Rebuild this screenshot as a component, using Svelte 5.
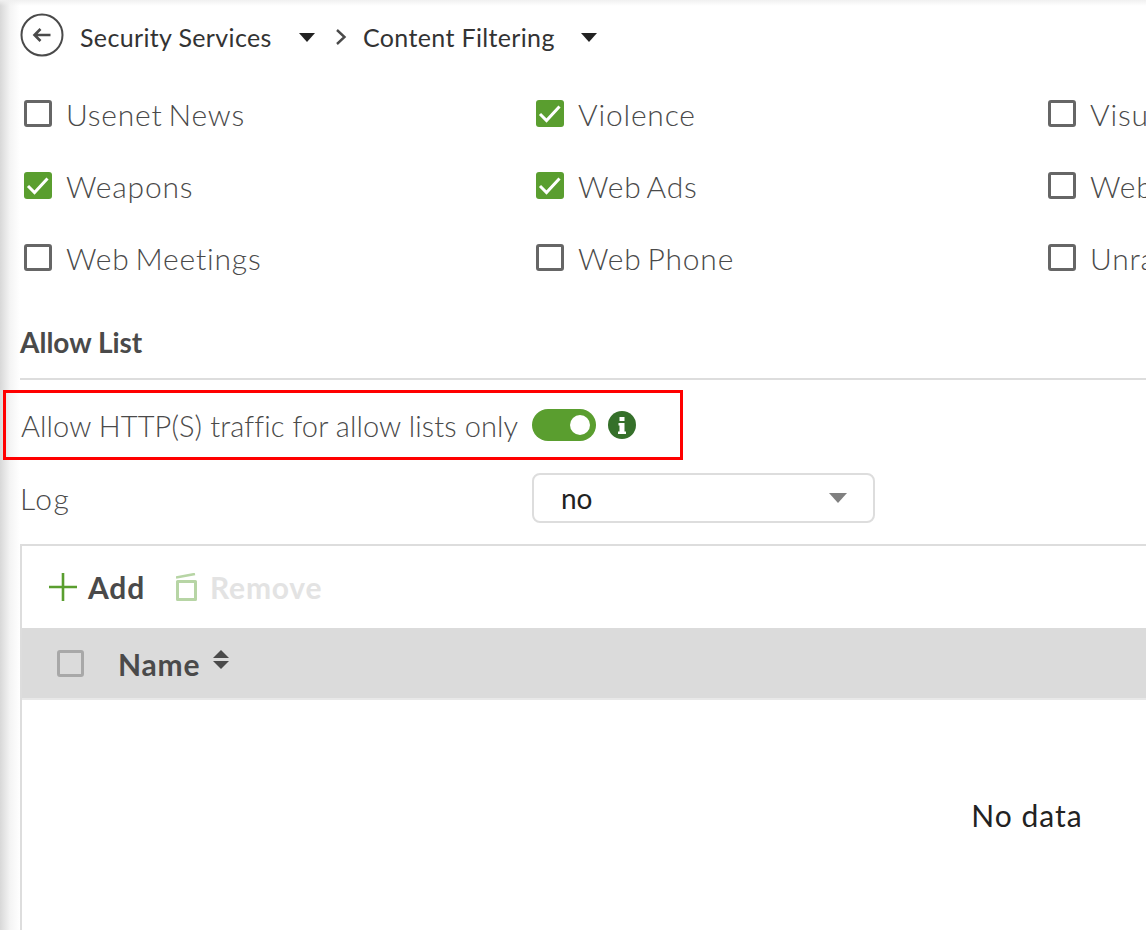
<script lang="ts">
	const Categories = [
		{ Name: 'Usenet News', Checked: false },
		{ Name: 'Violence', Checked: true },
		{ Name: 'Visual Search Engine', Checked: false },
		{ Name: 'Weapons', Checked: true },
		{ Name: 'Web Ads', Checked: true },
		{ Name: 'Web Chat', Checked: false },
		{ Name: 'Web Meetings', Checked: false },
		{ Name: 'Web Phone', Checked: false },
		{ Name: 'Unrated', Checked: false }
	];
</script>

<div class="page">
	<header class="crumbs">
		<svg class="back" viewBox="0 0 44 44" width="44" height="44">
			<circle cx="22" cy="22" r="20.5" fill="none" stroke="#4a4a4a" stroke-width="2" />
			<path d="M30.5 22H15M20.5 16L14.5 22L20.5 28" fill="none" stroke="#4a4a4a" stroke-width="2.6" />
		</svg>
		<span class="crumb first">Security Services</span>
		<span class="caret"></span>
		<svg class="chevron" viewBox="0 0 12 18" width="12" height="18">
			<path d="M2 2L9.5 9L2 16" fill="none" stroke="#4a4a4a" stroke-width="2.4" />
		</svg>
		<span class="crumb second">Content Filtering</span>
		<span class="caret"></span>
	</header>

	<div class="categories">
		{#each Categories as Category}
			<div class="category">
				{#if Category.Checked}
					<span class="box checked">
						<svg viewBox="0 0 28 27" width="28" height="27">
							<path d="M4 14L10.5 20.5L23.5 6.5" fill="none" stroke="#fff" stroke-width="3" />
						</svg>
					</span>
				{:else}
					<span class="box"></span>
				{/if}
				<span class="label">{Category.Name}</span>
			</div>
		{/each}
	</div>

	<h2 class="section">Allow List</h2>

	<div class="highlight">
		<span class="label allow">Allow HTTP(S) traffic for allow lists only</span>
		<span class="toggle"><span class="knob"></span></span>
		<span class="info">
			<svg viewBox="0 0 28 28" width="28" height="28">
				<circle cx="14" cy="14" r="14" fill="#35702a" />
				<rect x="11.5" y="6" width="5" height="4" fill="#fff" />
				<path d="M10.5 12H16.5V20.5H18V23H10V20.5H11.5V14.5H10.5Z" fill="#fff" />
			</svg>
		</span>
	</div>

	<div class="log-row">
		<span class="label log-label">Log</span>
		<div class="select">
			<span>no</span>
			<span class="select-caret"></span>
		</div>
	</div>

	<div class="table">
		<div class="toolbar">
			<svg viewBox="0 0 28 28" width="28" height="28">
				<path d="M14 0V28M0 14H28" stroke="#5a9e2f" stroke-width="2.6" fill="none" />
			</svg>
			<span class="tool add">Add</span>
			<svg class="trash" viewBox="0 0 21 28" width="21" height="28">
				<path d="M1.5 8.5H19.5V26.5H1.5Z" fill="none" stroke="#b7d5a5" stroke-width="3" stroke-linejoin="round" />
				<path d="M0 4.5L19 1" fill="none" stroke="#b7d5a5" stroke-width="2.6" />
			</svg>
			<span class="tool remove">Remove</span>
		</div>
		<div class="table-head">
			<span class="head-box"></span>
			<span class="head-name">Name</span>
			<svg class="sort" viewBox="0 0 18 20" width="18" height="20">
				<path d="M9 0L17 8H1Z M1 11H17L9 19Z" fill="#4a4a4a" />
			</svg>
		</div>
		<div class="table-body">No data</div>
	</div>
</div>

<style>
	:global(body) {
		margin: 0;
		background: #fff;
	}

	.page {
		width: 1146px;
		height: 930px;
		overflow: hidden;
		box-sizing: border-box;
		padding-left: 20px;
		font-family: Lato, 'Open Sans', sans-serif;
		font-weight: 300;
		color: #4a4a4a;
		background:
			linear-gradient(to bottom, #f0f0f0 0, rgba(255, 255, 255, 0) 6px),
			linear-gradient(to right, #d8d8d8 0, #f4f4f4 10px, #fff 20px);
	}

	.crumbs {
		display: flex;
		align-items: center;
		height: 74px;
		margin-bottom: 1px;
		color: #333;
		font-size: 25px;
		font-weight: 400;
		letter-spacing: 0.35px;
	}

	.back {
		flex: none;
		margin-bottom: 5px;
	}

	.crumb.first {
		margin-left: 16px;
		width: 219px;
	}

	.crumb.second {
		margin-left: 16px;
		width: 218px;
	}

	.chevron {
		margin-left: 20px;
	}

	.caret {
		width: 0;
		height: 0;
		border-left: 8px solid transparent;
		border-right: 8px solid transparent;
		border-top: 9px solid #222;
	}

	.categories {
		display: grid;
		grid-template-columns: repeat(3, 512px);
		grid-auto-rows: 72px;
		margin-left: 4px;
	}

	.category {
		display: flex;
		align-items: center;
		gap: 14px;
		white-space: nowrap;
		height: 77px;
	}

	.box {
		flex: none;
		box-sizing: border-box;
		width: 28px;
		height: 27px;
		border: 3px solid #666;
		border-radius: 3px;
	}

	.box.checked {
		border: 0;
		background: #5a9e2f;
	}

	.box svg {
		display: block;
	}

	.label {
		font-size: 30px;
		letter-spacing: 0.8px;
		word-spacing: -3px;
		white-space: nowrap;
	}

	.label.allow {
		font-size: 29px;
		letter-spacing: 0.1px;
		word-spacing: 0;
	}

	.section {
		margin: 31px 0 0;
		height: 56px;
		line-height: 40px;
		font-size: 28px;
		font-weight: 700;
		border-bottom: 2px solid #ddd;
	}

	.highlight {
		display: flex;
		align-items: center;
		box-sizing: border-box;
		width: 680px;
		height: 70px;
		margin: 10px 0 0 -17px;
		padding-left: 15px;
		border: 3px solid #f00;
	}

	.toggle {
		display: flex;
		align-items: center;
		justify-content: flex-end;
		box-sizing: border-box;
		width: 64px;
		height: 32px;
		margin-left: 14px;
		padding-right: 6px;
		border-radius: 16px;
		background: #5a9e2f;
	}

	.knob {
		width: 20px;
		height: 20px;
		border-radius: 50%;
		background: #fff;
	}

	.info {
		display: flex;
		margin-left: 12px;
	}

	.log-row {
		display: flex;
		align-items: center;
		margin-top: 13px;
		height: 50px;
	}

	.log-label {
		width: 512px;
		font-size: 30px;
		letter-spacing: 1.6px;
	}

	.select {
		display: flex;
		align-items: center;
		justify-content: space-between;
		box-sizing: border-box;
		width: 343px;
		height: 50px;
		padding: 0 26px 0 27px;
		border: 2px solid #ddd;
		border-radius: 8px;
		font-size: 28px;
		font-weight: 400;
		color: #222;
	}

	.select-caret {
		width: 0;
		height: 0;
		border-left: 9px solid transparent;
		border-right: 9px solid transparent;
		border-top: 10px solid #808080;
	}

	.table {
		display: flex;
		flex-direction: column;
		box-sizing: border-box;
		width: 2014px;
		height: 500px;
		margin-top: 21px;
		border: 2px solid #ddd;
	}

	.toolbar {
		display: flex;
		align-items: center;
		height: 82px;
		padding-left: 27px;
	}

	.tool {
		font-size: 30px;
		font-weight: 700;
		letter-spacing: 0.8px;
	}

	.add {
		margin-left: 11px;
	}

	.trash {
		margin-left: 31px;
	}

	.remove {
		margin-left: 13px;
		color: #e3e3e3;
	}

	.table-head {
		display: flex;
		align-items: center;
		box-sizing: border-box;
		height: 72px;
		padding-left: 35px;
		background: #dbdbdb;
		border-bottom: 2px solid #e8e8e8;
	}

	.head-box {
		box-sizing: border-box;
		width: 27px;
		height: 27px;
		border: 3px solid #a8a8a8;
		border-radius: 3px;
	}

	.head-name {
		margin-left: 34px;
		padding-top: 2px;
		font-size: 30px;
		font-weight: 700;
		letter-spacing: 0.8px;
	}

	.sort {
		margin: -6px 0 0 12px;
	}

	.table-body {
		display: flex;
		align-items: center;
		justify-content: center;
		height: 230px;
		font-size: 30px;
		font-weight: 400;
		letter-spacing: 1px;
		color: #222;
	}
</style>
